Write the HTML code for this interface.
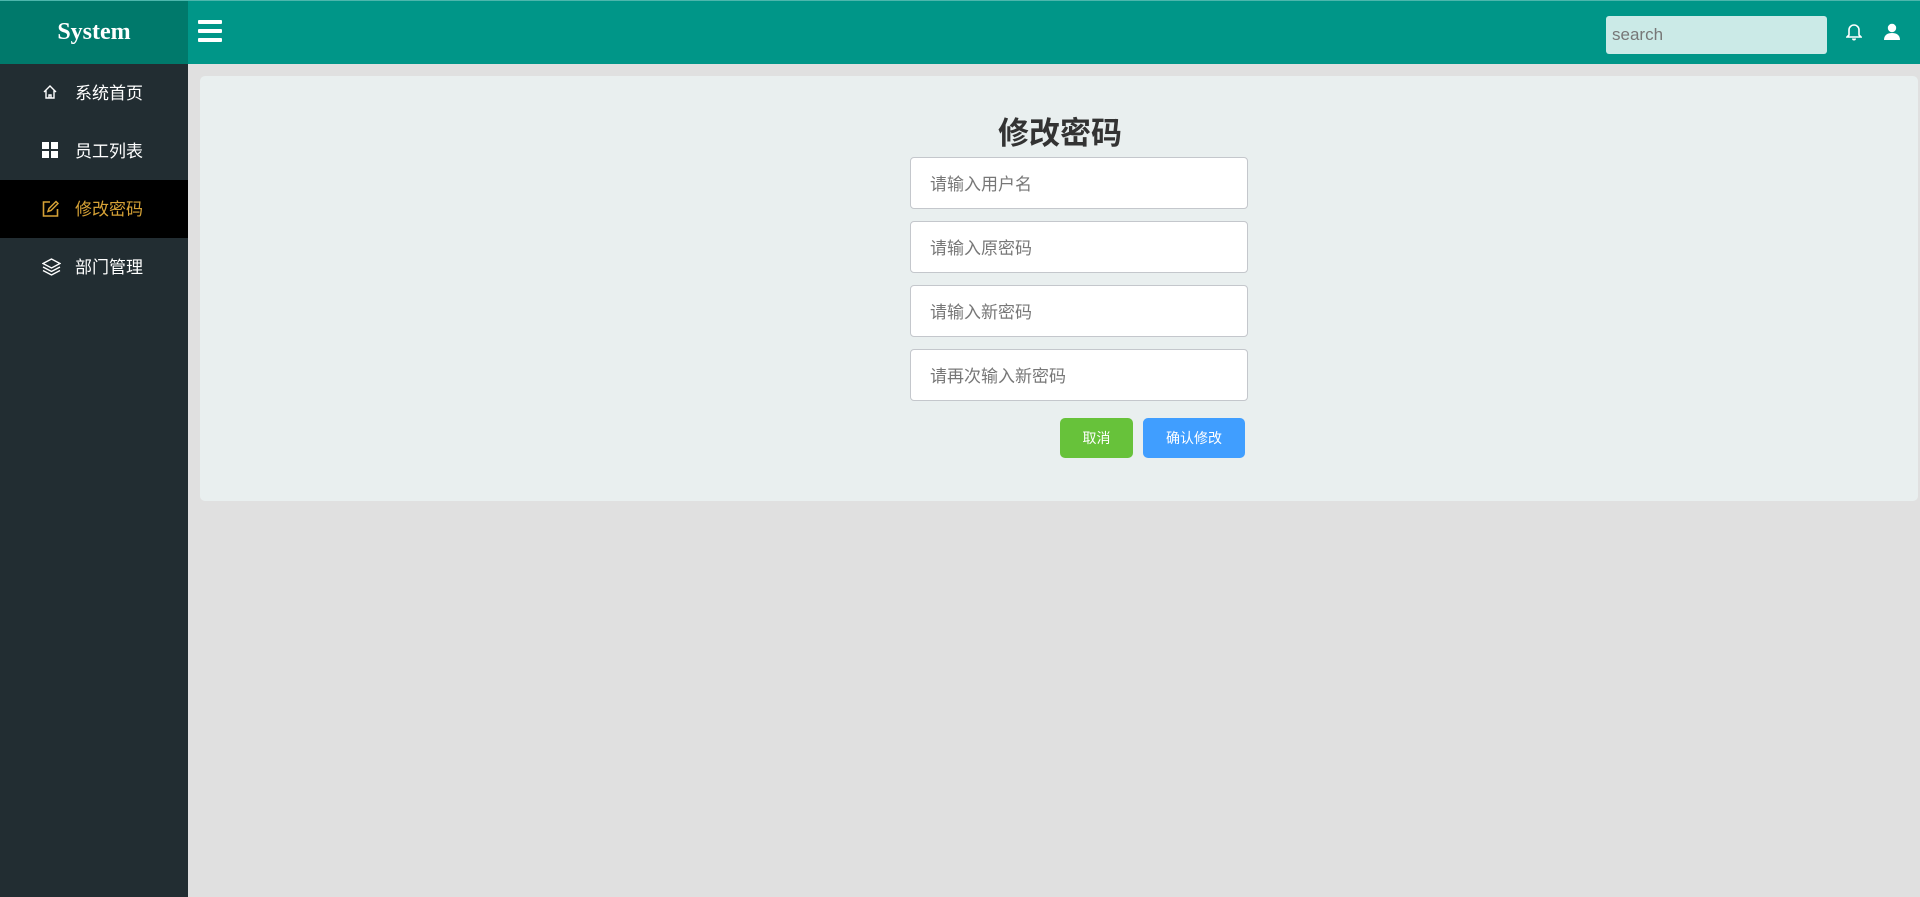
<!DOCTYPE html>
<html><head><meta charset="utf-8"><style>
*{box-sizing:border-box;margin:0;padding:0}
body{width:1920px;height:897px;background:#e0e0e0;font-family:"Liberation Sans","Noto Sans CJK SC",sans-serif;position:relative;overflow:hidden}
.top{position:absolute;left:0;top:0;width:1920px;height:64px;background:#009688;border-top:1px solid #4db6ac}
.logo{position:absolute;left:0;top:0;width:188px;height:64px;background:#00796b;color:#fff;font:bold 24px "Liberation Serif",serif;text-align:center;line-height:62px}
.burger{position:absolute;left:198px;top:19px;width:24px}
.burger i{display:block;height:4px;background:#fff;border-radius:1px;margin-bottom:5px}
.search{position:absolute;left:1606px;top:15px;width:221px;height:38px;background:#cbeae7;border-radius:3px;color:#777;font-size:17px;line-height:38px;padding-left:6px}
.side{position:absolute;left:0;top:64px;width:188px;height:833px;background:#222d32}
.item{height:58px;color:#fff;font-size:17px;line-height:60px;padding-left:75px;position:relative}
.item svg{position:absolute;left:42px;top:20px}
.item.act{background:#000;color:#d5a136}
.card{position:absolute;left:200px;top:76px;width:1718px;height:425px;background:#e9efef;border-radius:5px}
h1{position:absolute;top:108px;text-align:center;font-size:31px;color:#333;font-weight:bold}
.inp{position:absolute;left:910px;width:338px;height:52px;background:#fff;border:1px solid #c4c7cc;border-radius:4px;color:#777;font-size:17px;line-height:53px;padding-left:19px}
.btn{position:absolute;top:418px;height:40px;border-radius:5px;color:#fff;font-size:14px;text-align:center;line-height:40px}
</style></head><body>
<div class="top">
<div class="logo">System</div>
<div class="burger"><i></i><i></i><i></i></div>
<div class="search">search</div>
<svg style="position:absolute;left:1846px;top:22px" width="16" height="18" viewBox="0 0 16 18"><path d="M8 2a5 5 0 0 0-5 5v5l-2 2h14l-2-2V7a5 5 0 0 0-5-5z" fill="none" stroke="#fff" stroke-width="1.6"/><path d="M6 15.5a2 2 0 0 0 4 0" fill="#fff"/></svg>
<svg style="position:absolute;left:1883px;top:22px" width="18" height="17" viewBox="0 0 18 17"><circle cx="9" cy="5" r="4.2" fill="#fff"/><path d="M1 17c0-5 3.5-7 8-7s8 2 8 7z" fill="#fff"/></svg>
</div>
<div class="side">
<div class="item"><svg width="16" height="16" viewBox="0 0 16 16"><path d="M2 8L8 2l6 6M4 6.5V14h8V6.5M7 14v-3h2v3" fill="none" stroke="#fff" stroke-width="1.4"/></svg>系统首页</div>
<div class="item"><svg width="16" height="16" viewBox="0 0 16 16"><rect x="0" y="0" width="7" height="7" fill="#fff"/><rect x="9" y="0" width="7" height="7" fill="#fff"/><rect x="0" y="9" width="7" height="7" fill="#fff"/><rect x="9" y="9" width="7" height="7" fill="#fff"/></svg>员工列表</div>
<div class="item act"><svg width="17" height="17" viewBox="0 0 17 17"><path d="M8 2H1.5v14h14V9" fill="none" stroke="#d5a136" stroke-width="1.6"/><path d="M14 1.5l2 2-7 7-3 1 1-3z" fill="none" stroke="#d5a136" stroke-width="1.5"/></svg>修改密码</div>
<div class="item"><svg width="19" height="18" viewBox="0 0 19 18"><path d="M9.5 1L1 5.5l8.5 4.5L18 5.5z" fill="none" stroke="#fff" stroke-width="1.4"/><path d="M1 9l8.5 4.5L18 9M1 12.5l8.5 4.5 8.5-4.5" fill="none" stroke="#fff" stroke-width="1.4"/></svg>部门管理</div>
</div>
<div class="card"></div>
<h1 style="left:0;width:2120px">修改密码</h1>
<div class="inp" style="top:157px">请输入用户名</div>
<div class="inp" style="top:221px">请输入原密码</div>
<div class="inp" style="top:285px">请输入新密码</div>
<div class="inp" style="top:349px">请再次输入新密码</div>
<div class="btn" style="left:1060px;width:73px;background:#67c23a">取消</div>
<div class="btn" style="left:1143px;width:102px;background:#409eff">确认修改</div>
</body></html>
